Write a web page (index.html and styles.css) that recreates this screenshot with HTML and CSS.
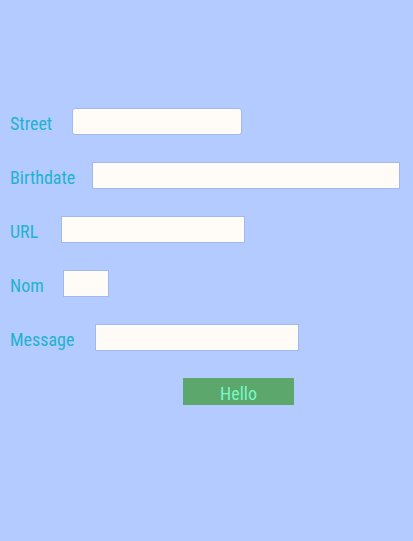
FILE: index.html
```html
<!DOCTYPE html>
<html lang="en">
<head>
<meta charset="utf-8">
<meta name="viewport" content="width=device-width, initial-scale=1">
<title>Form</title>
<link rel="stylesheet" href="styles.css">
</head>
<body>
<form class="form">
  <div class="row row-street">
    <label for="street">Street</label>
    <input class="field" id="street" type="text">
  </div>
  <div class="row row-birthdate">
    <label for="birthdate">Birthdate</label>
    <input class="field" id="birthdate" type="text">
  </div>
  <div class="row row-url">
    <label for="url">URL</label>
    <input class="field" id="url" type="text">
  </div>
  <div class="row row-nom">
    <label for="nom">Nom</label>
    <input class="field" id="nom" type="text">
  </div>
  <div class="row row-message">
    <label for="message">Message</label>
    <input class="field" id="message" type="text">
  </div>
  <button class="submit" type="button">Hello</button>
</form>
</body>
</html>
```

FILE: styles.css
```css
* {
  box-sizing: border-box;
}

body {
  margin: 0;
  min-height: 100vh;
  background: #b3cbff;
  color: #22b2cf;
  font: 400 18px/27px "Liberation Sans Narrow", "Arial Narrow", "Roboto Condensed", "Liberation Sans", sans-serif;
}

.form {
  display: flex;
  flex-direction: column;
  gap: 27px;
  padding: 108px 13px 20px 10px;
}

.row {
  display: grid;
  align-items: center;
  column-gap: 20px;
}

.row-street {
  grid-template-columns: 42px 170px;
}

.row-birthdate {
  grid-template-columns: 62px 1fr;
}

.row-url {
  grid-template-columns: 31px 184px;
}

.row-nom {
  grid-template-columns: 33px 46px;
}

.row-message {
  grid-template-columns: 65px 204px;
}

.row label {
  padding-top: 4px;
  line-height: 23px;
  white-space: nowrap;
}

.field {
  width: 100%;
  height: 27px;
  min-width: 0;
  padding: 0 6px;
  border: 1px solid #a3b8ec;
  border-radius: 0;
  background: #fffcf7;
  color: inherit;
  font: inherit;
}

.row-street .field {
  border-radius: 3px;
}

.submit {
  width: 111px;
  height: 27px;
  margin-left: 173px;
  padding: 4px 0 0;
  border: 0;
  background: #5ba76c;
  color: #78f8c4;
  font: inherit;
  line-height: 23px;
}
```
